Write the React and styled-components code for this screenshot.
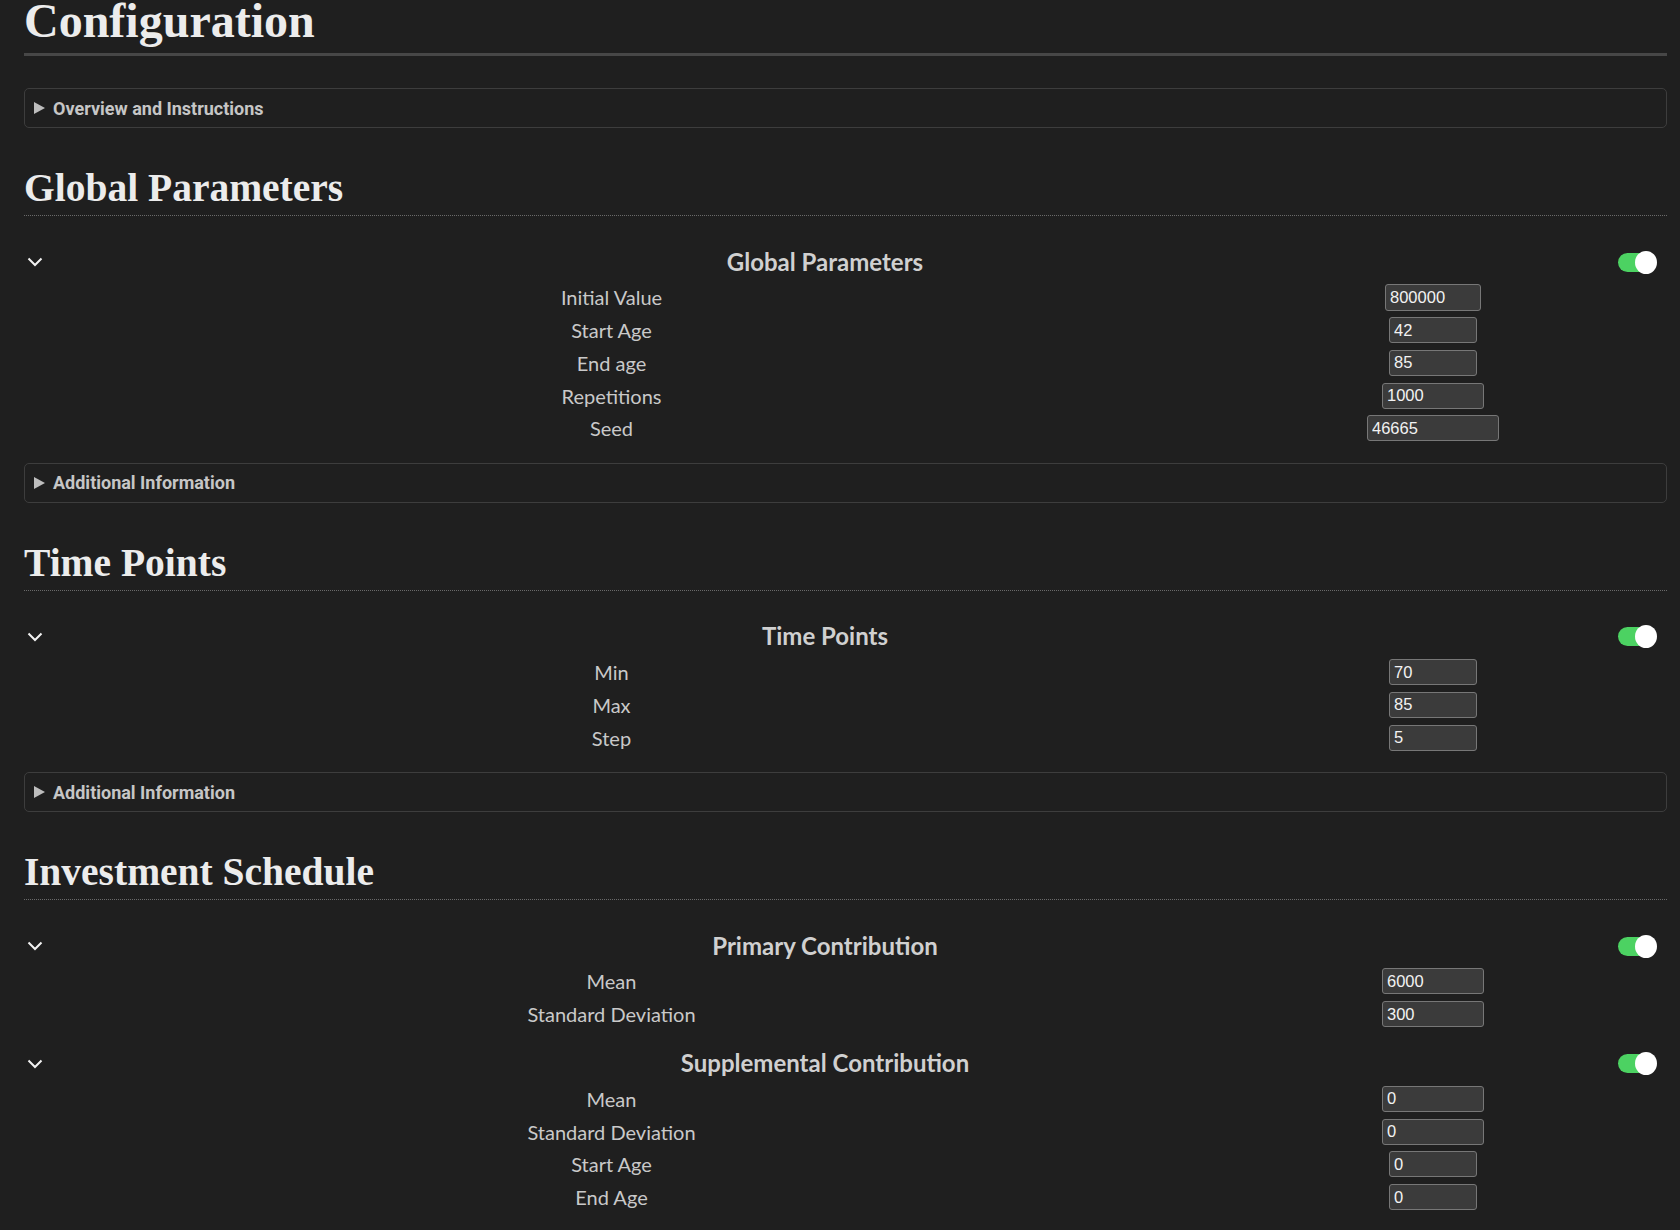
import React from 'react';
import styled, { createGlobalStyle } from 'styled-components';

const GlobalStyle = createGlobalStyle`
  html, body {
    margin: 0;
    padding: 0;
    background: #1f1f1f;
  }
  body {
    font-family: Lato, "Noto Sans", sans-serif;
    color: #c9c9c9;
  }
`;

const Page = styled.div`
  padding: 0 13px 40px 24px;
  min-height: 1230px;
  box-sizing: border-box;
  overflow: hidden;
`;

const PageTitle = styled.h1`
  margin: -2px 0 0;
  padding-bottom: 10px;
  font-family: "Liberation Serif", serif;
  font-size: 48px;
  line-height: 45px;
  font-weight: 700;
  color: #ececec;
  border-bottom: 3px solid #474747;
`;

const SectionTitle = styled.h2`
  margin: 42px 0 0;
  padding-bottom: 9px;
  font-family: "Liberation Serif", serif;
  font-size: 39.5px;
  line-height: 36px;
  font-weight: 700;
  color: #ececec;
  border-bottom: 1px dotted #6a6a6a;
`;

const Details = styled.details`
  margin-top: ${(p) => p.$top}px;
  height: 40px;
  box-sizing: border-box;
  border: 1px solid #3d3d3d;
  border-radius: 5px;
`;

const Summary = styled.summary`
  list-style: none;
  display: flex;
  align-items: center;
  gap: 8px;
  height: 38px;
  padding-left: 9px;
  font-family: Roboto, "Liberation Sans", sans-serif;
  font-size: 18px;
  font-weight: 700;
  color: #c6c6c6;
  cursor: pointer;
  &::-webkit-details-marker {
    display: none;
  }
`;

const Marker = styled.span`
  width: 0;
  height: 0;
  border-top: 6px solid transparent;
  border-bottom: 6px solid transparent;
  border-left: 11px solid #bdbdbd;
`;

const Group = styled.div`
  margin-top: ${(p) => p.$top}px;
`;

const GroupHeader = styled.div`
  display: grid;
  grid-template-columns: 30px 1fr 71px;
  align-items: center;
  height: 32px;
`;

const Chevron = styled.svg`
  margin-left: 3px;
  display: block;
`;

const GroupTitle = styled.div`
  text-align: center;
  font-size: 24px;
  font-weight: 700;
  color: #d0d0d0;
  transform: translateY(-1px);
`;

const Toggle = styled.span`
  justify-self: end;
  margin-right: 10px;
  position: relative;
  width: 39px;
  height: 23px;
  &::before {
    content: '';
    position: absolute;
    left: 0;
    top: 2px;
    width: 36px;
    height: 19px;
    border-radius: 10px;
    background: #4cd262;
  }
  &::after {
    content: '';
    position: absolute;
    right: 0;
    top: 0;
    width: 22px;
    height: 23px;
    border-radius: 50%;
    background: #ffffff;
  }
`;

const Fields = styled.div`
  margin-top: 3px;
  display: grid;
  grid-template-columns: 1175px 1fr;
  grid-auto-rows: 32.75px;
  align-items: center;
`;

const Label = styled.label`
  text-align: center;
  font-size: 20px;
  color: #c9c9c9;
`;

const Input = styled.input`
  justify-self: center;
  width: ${(p) => p.$w}px;
  height: ${(p) => p.$h || 26}px;
  box-sizing: border-box;
  padding: 0 4px;
  background: #3b3b3b;
  border: 1px solid #777777;
  border-radius: 3px;
  color: #f2f2f2;
  font-family: "Liberation Sans", Arial, sans-serif;
  font-size: 16.5px;
  outline: none;
`;

const sections = [
  {
    title: 'Global Parameters',
    groups: [
      {
        title: 'Global Parameters',
        fields: [
          ['Initial Value', '800000', 96, 27],
          ['Start Age', '42', 88],
          ['End age', '85', 88],
          ['Repetitions', '1000', 102],
          ['Seed', '46665', 132],
        ],
      },
    ],
    info: true,
  },
  {
    title: 'Time Points',
    groups: [
      {
        title: 'Time Points',
        fields: [
          ['Min', '70', 88],
          ['Max', '85', 88],
          ['Step', '5', 88],
        ],
      },
    ],
    info: true,
  },
  {
    title: 'Investment Schedule',
    groups: [
      {
        title: 'Primary Contribution',
        fields: [
          ['Mean', '6000', 102],
          ['Standard Deviation', '300', 102],
        ],
      },
      {
        title: 'Supplemental Contribution',
        fields: [
          ['Mean', '0', 102],
          ['Standard Deviation', '0', 102],
          ['Start Age', '0', 88],
          ['End Age', '0', 88],
        ],
      },
    ],
  },
];

const Fold = ({ top, children }) => (
  <Details $top={top}>
    <Summary>
      <Marker />
      {children}
    </Summary>
  </Details>
);

const ParamGroup = ({ group, top }) => (
  <Group $top={top}>
    <GroupHeader>
      <Chevron width="16" height="10" viewBox="0 0 16 10">
        <polyline points="1.5,1.5 8,8 14.5,1.5" fill="none" stroke="#f2f2f2" strokeWidth="2" />
      </Chevron>
      <GroupTitle>{group.title}</GroupTitle>
      <Toggle />
    </GroupHeader>
    <Fields>
      {group.fields.map(([label, value, w, h]) => (
        <React.Fragment key={label}>
          <Label>{label}</Label>
          <Input defaultValue={value} $w={w} $h={h} />
        </React.Fragment>
      ))}
    </Fields>
  </Group>
);

const App = () => (
  <Page>
    <GlobalStyle />
    <PageTitle>Configuration</PageTitle>
    <Fold top={32}>Overview and Instructions</Fold>
    {sections.map((section) => (
      <section key={section.title}>
        <SectionTitle>{section.title}</SectionTitle>
        {section.groups.map((group, i) => (
          <ParamGroup key={group.title} group={group} top={i === 0 ? 30 : 17} />
        ))}
        {section.info && <Fold top={18}>Additional Information</Fold>}
      </section>
    ))}
  </Page>
);

export default App;
